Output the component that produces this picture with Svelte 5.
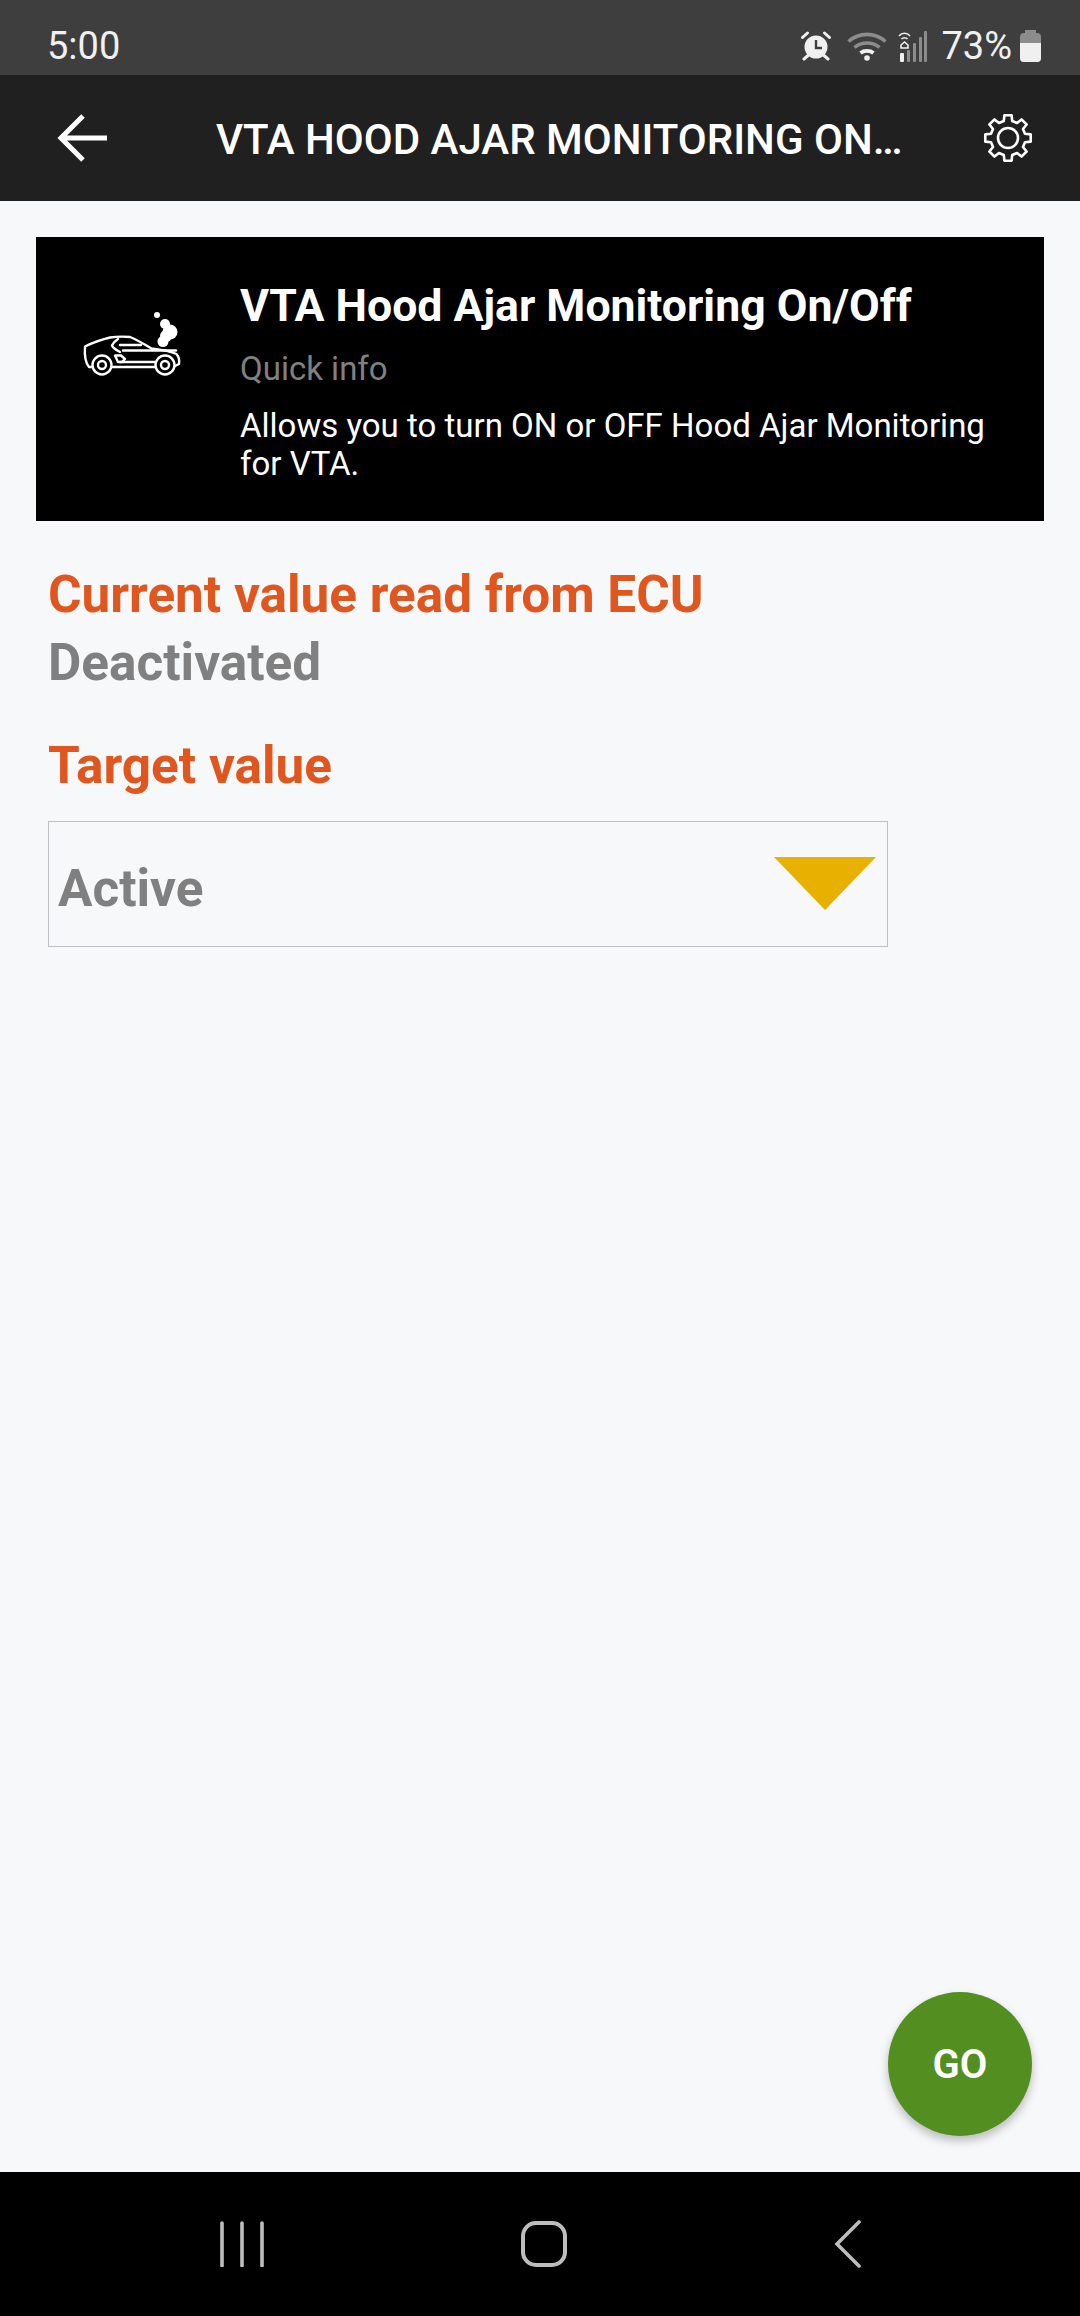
<script>
  const title = 'VTA Hood Ajar Monitoring On/Off';

  // eight rounded cog teeth around the centre of a 50 box
  function cogPath(teeth, outer, root) {
    const step = (Math.PI * 2) / teeth;
    const pts = [];
    for (let i = 0; i < teeth; i++) {
      const a = i * step - Math.PI / 2;
      const w = step * 0.2;
      const g = step * 0.31;
      pts.push([a - g, root], [a - w, outer], [a + w, outer], [a + g, root]);
    }
    const xy = pts.map(([a, r]) => `${(25 + r * Math.cos(a)).toFixed(2)} ${(25 + r * Math.sin(a)).toFixed(2)}`);
    return 'M' + xy.join('L') + 'Z';
  }

  const cog = cogPath(8, 23, 17.5);
</script>

<div class="screen">
  <div class="status">
    <span class="time">5:00</span>
    <div class="status-right">
      <svg class="alarm" viewBox="0 0 30 30" width="30" height="30" aria-hidden="true">
        <circle cx="15" cy="16" r="11.5" fill="#f0f0f0" />
        <path d="M15 9v8h6" fill="none" stroke="#3e3e3e" stroke-width="2.4" />
        <path d="M1.5 6.5 6.5 2M28.5 6.5 23.5 2M3 28l4-3.5M27 28l-4-3.5" stroke="#f0f0f0" stroke-width="3" stroke-linecap="round" fill="none" />
      </svg>
      <svg class="wifi" viewBox="0 0 40 30" width="40" height="30" aria-hidden="true">
        <path d="M1.5 10.5C12 1 28 1 38.5 10.5" fill="none" stroke="#8c8c8c" stroke-width="3.6" />
        <path d="M7.5 16.5C14.5 10.5 25.5 10.5 32.5 16.5" fill="none" stroke="#8c8c8c" stroke-width="3.6" />
        <path d="M13.5 22C17 19.2 23 19.2 26.5 22" fill="none" stroke="#f0f0f0" stroke-width="3.6" />
        <circle cx="20" cy="27" r="2.8" fill="#f0f0f0" />
      </svg>
      <svg class="signal" viewBox="0 0 30 32" width="30" height="32" aria-hidden="true">
        <path d="M2 6a7 7 0 0 1 11 0M4.5 9a4 4 0 0 1 6 0" fill="none" stroke="#f0f0f0" stroke-width="1.5" />
        <path d="M4 15l3.5-3 3.5 3v3H4z" fill="none" stroke="#f0f0f0" stroke-width="1.6" />
        <rect x="3" y="23" width="4" height="9" rx="1" fill="#f0f0f0" />
        <rect x="10" y="20" width="3" height="12" rx="1" fill="#8c8c8c" />
        <rect x="16" y="13" width="3" height="19" rx="1" fill="#8c8c8c" />
        <rect x="22" y="7" width="3" height="25" rx="1" fill="#8c8c8c" />
        <rect x="27" y="1" width="3" height="31" rx="1" fill="#8c8c8c" />
      </svg>
      <span class="pct">73%</span>
      <div class="battery"><div class="battery-fill"></div></div>
    </div>
  </div>

  <header class="toolbar">
    <svg class="back" viewBox="0 0 50 50" width="50" height="50" aria-hidden="true">
      <path d="M50 25H4M26 3 4 25 26 47" fill="none" stroke="#fff" stroke-width="5" />
    </svg>
    <h1 class="toolbar-title">VTA HOOD AJAR MONITORING ON…</h1>
    <svg class="gear" viewBox="0 0 50 50" width="50" height="50" aria-hidden="true">
      <g fill="none" stroke="#fff" stroke-width="2.6" stroke-linejoin="round">
        <path d={cog} />
        <circle cx="25" cy="25" r="10" />
      </g>
    </svg>
  </header>

  <main class="content">
    <section class="card">
      <svg class="car" viewBox="0 0 96 64" width="96" height="64" aria-hidden="true">
        <g fill="none" stroke="#fff" stroke-width="2.4" stroke-linejoin="round" stroke-linecap="round">
          <path d="M8 55H5C1.5 51 .5 42 1 34.5C8 31 16 28 26 25.5C33 24.5 40 24.5 46 25C54 28 61 33 67.5 36.5C76 37.5 86 39 92.5 42C95 45 95.5 49 95 52L91 54" />
          <path d="M27 55H71" />
          <path d="M36 50H71" />
          <path d="M39 38.5H92" />
          <path d="M36 40C32 38 29 36 28 33.5C29 31 31 29 34 27M36 33H57" />
          <path d="M31 43.5H37L41 47 38 50H34Z" />
          <circle cx="18" cy="53" r="9.5" />
          <circle cx="18" cy="53" r="4" />
          <circle cx="81" cy="53" r="9.5" />
          <circle cx="81" cy="53" r="4" />
        </g>
        <g fill="#fff">
          <circle cx="73" cy="3" r="3" />
          <circle cx="81" cy="12" r="5" />
          <circle cx="86" cy="20" r="7.5" />
          <circle cx="82" cy="24" r="6" />
          <circle cx="79" cy="29.5" r="5.5" />
        </g>
      </svg>
      <div class="card-body">
        <h2 class="card-title">{title}</h2>
        <div class="card-sub">Quick info</div>
        <p class="card-desc">Allows you to turn ON or OFF Hood Ajar Monitoring for VTA.</p>
      </div>
    </section>

    <div class="fields">
      <div class="label">Current value read from ECU</div>
      <div class="value">Deactivated</div>
      <div class="label label--target">Target value</div>
      <div class="select">
        <span class="value value--select">Active</span>
        <div class="arrow"></div>
      </div>
    </div>

    <button class="go">GO</button>
  </main>

  <nav class="navbar">
    <svg viewBox="0 0 44 46" width="44" height="46" aria-hidden="true">
      <path d="M2 2v43M22 2v43M42 2v43" stroke="#bdbdbd" stroke-width="3.6" stroke-linecap="round" fill="none" />
    </svg>
    <svg class="nav-home" viewBox="0 0 46 46" width="46" height="46" aria-hidden="true">
      <rect x="2" y="2" width="42" height="42" rx="13" fill="none" stroke="#bdbdbd" stroke-width="4" />
    </svg>
    <svg class="nav-back" viewBox="0 0 30 48" width="30" height="48" aria-hidden="true">
      <path d="M26 2 4 24l22 22" stroke="#bdbdbd" stroke-width="3.6" stroke-linecap="round" fill="none" />
    </svg>
  </nav>
</div>

<style>
  :global(body) {
    margin: 0;
    font-family: Roboto, "Liberation Sans", sans-serif;
  }

  .screen {
    width: 1080px;
    height: 2316px;
    display: flex;
    flex-direction: column;
    background: #f7f8fa;
    overflow: hidden;
  }

  .status {
    height: 75px;
    box-sizing: border-box;
    padding: 17px 39px 0 47px;
    display: flex;
    align-items: center;
    justify-content: space-between;
    background: #3e3e3e;
    color: #f0f0f0;
  }

  .time {
    font-size: 38px;
  }

  .status-right {
    display: flex;
    align-items: center;
  }

  .wifi { margin-left: 16px; }
  .signal { margin-left: 10px; }

  .pct {
    font-size: 38px;
    margin-left: 14px;
  }

  .battery {
    width: 21px;
    height: 29px;
    margin: 3px 0 0 8px;
    border-radius: 4px;
    background: #8c8c8c;
    position: relative;
    display: flex;
    align-items: flex-end;
  }

  .battery::before {
    content: '';
    position: absolute;
    top: -3px;
    left: 5px;
    width: 11px;
    height: 4px;
    background: #8c8c8c;
  }

  .battery-fill {
    width: 100%;
    height: 19px;
    background: #f0f0f0;
    border-radius: 0 0 4px 4px;
  }

  .toolbar {
    height: 126px;
    box-sizing: border-box;
    padding: 0 47px 0 57px;
    display: flex;
    align-items: center;
    background: #202020;
  }

  .toolbar-title {
    flex: 1;
    min-width: 0;
    margin: 2px 0 0 109px;
    font-size: 42px;
    font-weight: 500;
    color: #fff;
    white-space: nowrap;
  }

  .content {
    flex: 1;
    position: relative;
    padding-top: 36px;
  }

  .card {
    margin: 0 36px;
    height: 284px;
    box-sizing: border-box;
    padding: 41px 40px 0 48px;
    display: flex;
    background: #000;
  }

  .car {
    margin-top: 34px;
    flex-shrink: 0;
    overflow: visible;
  }

  .card-body {
    margin-left: 60px;
    color: #fff;
  }

  .card-title {
    margin: 0;
    font-size: 44.6px;
    font-weight: 700;
    line-height: 56px;
  }

  .card-sub {
    margin-top: 15px;
    font-size: 33px;
    line-height: 40px;
    color: #808080;
  }

  .card-desc {
    margin: 18px 0 0;
    font-size: 33px;
    line-height: 38px;
  }

  .fields {
    padding: 44px 48px 0;
  }

  .label {
    font-size: 51.3px;
    font-weight: 700;
    line-height: 60px;
    color: #e0561f;
  }

  .label--target {
    margin-top: 36px;
  }

  .value {
    font-size: 51.3px;
    font-weight: 700;
    line-height: 75px;
    color: #808080;
  }

  .value--select {
    padding-top: 8px;
  }

  .select {
    width: 840px;
    height: 126px;
    box-sizing: border-box;
    margin-top: 25px;
    padding: 0 11px 0 9px;
    display: flex;
    align-items: center;
    justify-content: space-between;
    border: 1.5px solid #bdbfc2;
  }

  .arrow {
    width: 0;
    height: 0;
    margin-bottom: 1px;
    border-left: 51px solid transparent;
    border-right: 51px solid transparent;
    border-top: 53px solid #e8b000;
  }

  .go {
    position: absolute;
    right: 48px;
    bottom: 36px;
    width: 144px;
    height: 144px;
    padding: 0;
    border: none;
    border-radius: 50%;
    background: #528e20;
    color: #fff;
    font-family: inherit;
    font-size: 40px;
    font-weight: 600;
    box-shadow: 0 5px 10px rgba(0, 0, 0, 0.25);
  }

  .navbar {
    height: 144px;
    padding-left: 220px;
    display: flex;
    align-items: center;
    background: #000;
  }

  .nav-home { margin-left: 257px; }
  .nav-back { margin-left: 266px; }
</style>
